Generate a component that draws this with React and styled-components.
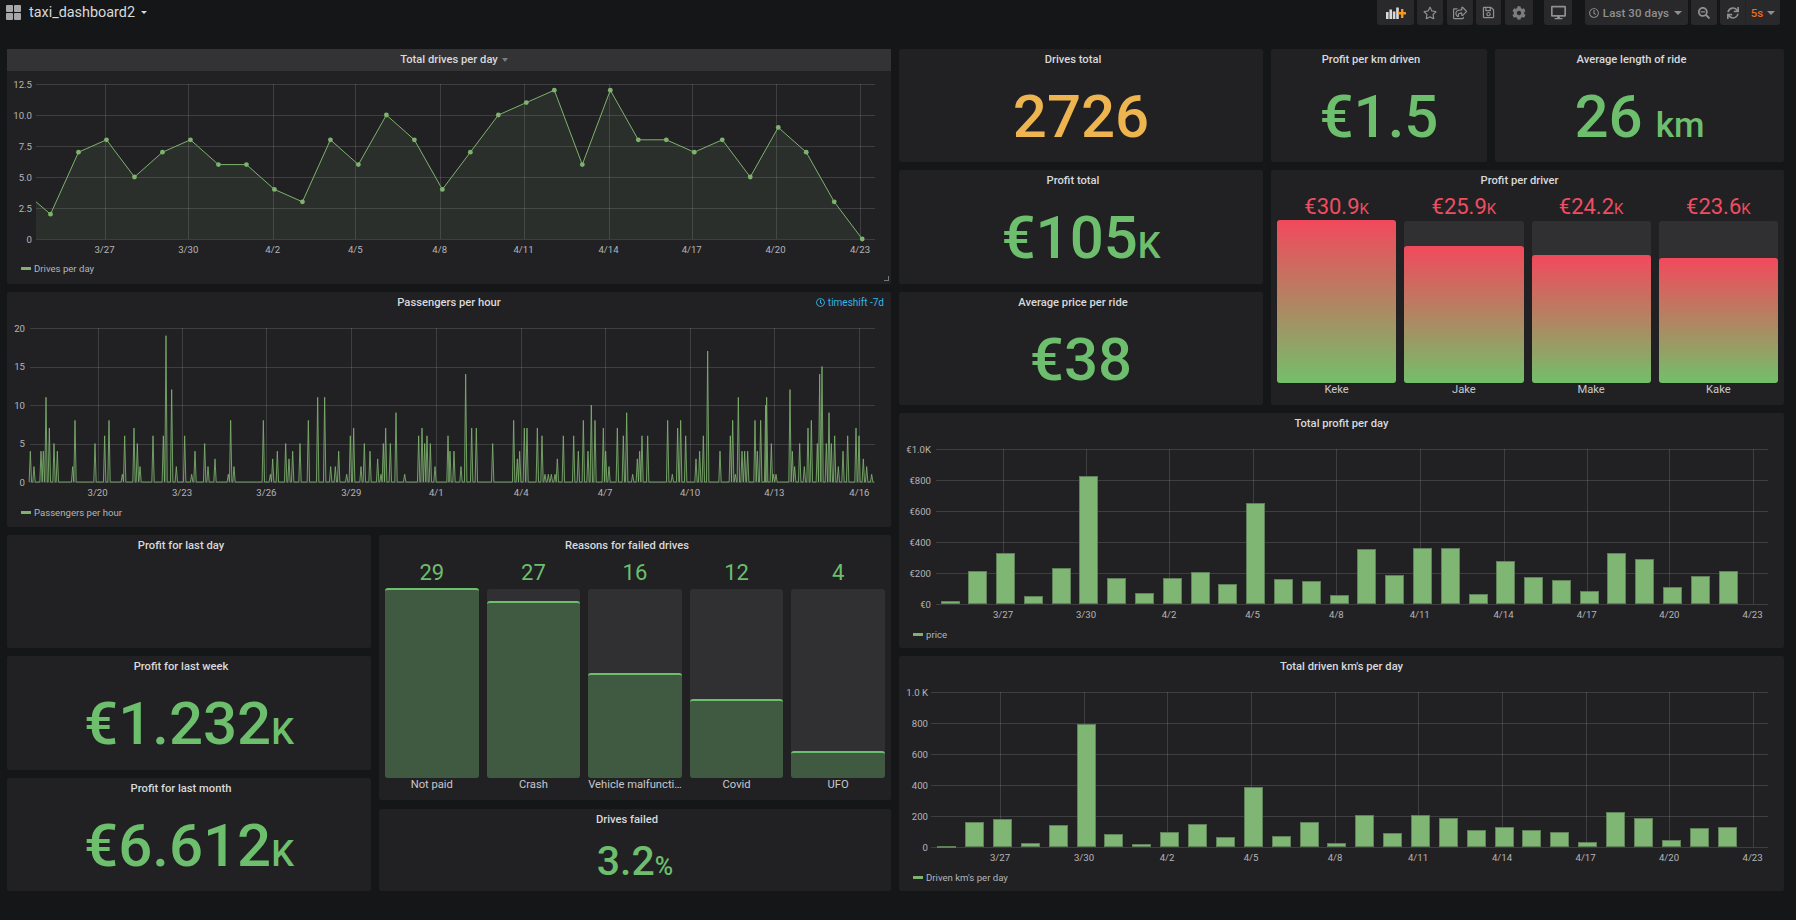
import React from 'react';
import styled, { createGlobalStyle } from 'styled-components';
import {
  FaRegStar,
  FaRegShareSquare,
  FaRegSave,
  FaCog,
  FaDesktop,
  FaRegClock,
  FaSearchMinus,
  FaSync,
} from 'react-icons/fa';

const GREEN = '#6dbf6d';
const LINE = '#7eb26d';

const drivesPerDay = [
  2, 7, 8, 5, 7, 8, 6, 6, 4, 3, 8, 6, 10, 8, 4, 7, 10, 11, 12, 6, 12, 8, 8, 7, 8, 5, 9, 7, 3, 0,
];

// [x in the 450px crop * 3, passengers]
const passengersLeft = [
  [91, 4], [102, 2], [123, 4], [130, 4], [138, 11], [148, 7], [162, 5], [172, 4], [218, 2], [225, 8],
  [285, 5], [314, 6], [327, 8], [367, 1], [374, 6], [402, 7], [412, 5], [420, 2], [459, 6], [490, 6],
  [498, 19], [515, 12], [529, 2], [554, 6], [575, 1], [585, 4], [614, 5], [624, 2], [645, 3], [685, 1],
  [692, 8], [702, 2], [790, 8], [811, 1], [818, 3], [832, 4], [857, 5], [867, 3], [878, 4], [900, 5],
  [925, 8], [953, 11], [974, 11], [992, 2], [1006, 2], [1016, 4], [1040, 1], [1051, 6], [1061, 7],
  [1083, 2], [1093, 5], [1110, 4], [1133, 3], [1143, 1], [1150, 5], [1157, 7], [1171, 5], [1188, 9],
  [1214, 1], [1256, 6], [1266, 7], [1274, 5], [1281, 6], [1291, 5], [1305, 2], [1344, 6],
];
const passengersRight = [
  [0, 4], [12, 4], [33, 2], [47, 14], [65, 7], [79, 7], [128, 5], [191, 8], [202, 3], [209, 4],
  [223, 7], [231, 7], [262, 7], [276, 6], [285, 1], [295, 1], [304, 1], [315, 1], [322, 3], [340, 6],
  [371, 6], [385, 4], [400, 8], [414, 4], [424, 10], [435, 8], [460, 7], [467, 4], [477, 2], [502, 7],
  [520, 6], [530, 9], [548, 1], [562, 3], [569, 4], [576, 6], [593, 6], [653, 8], [667, 1], [683, 7],
  [692, 8], [707, 6], [738, 3], [749, 4], [760, 6], [773, 17], [810, 4], [841, 6], [848, 8], [856, 1],
  [865, 11], [876, 4], [884, 4], [893, 4], [915, 8], [922, 4], [932, 8], [947, 10], [950, 11], [964, 5],
  [970, 1], [978, 1], [1020, 12], [1027, 4], [1034, 2], [1049, 5], [1063, 2], [1074, 7], [1084, 8],
  [1102, 5], [1109, 14], [1116, 15], [1129, 5], [1137, 9], [1144, 5], [1154, 6], [1165, 2], [1179, 4],
  [1193, 6], [1218, 7], [1227, 6], [1240, 3], [1250, 2], [1265, 1],
];

const profitPerDay = [
  19, 213, 327, 54, 233, 825, 170, 69, 170, 205, 129, 649, 162, 147, 58, 356, 187, 364, 360, 65, 278,
  175, 155, 86, 330, 289, 108, 181, 213,
];
const kmPerDay = [
  5, 159, 179, 24, 142, 795, 82, 22, 95, 147, 65, 386, 69, 159, 24, 207, 90, 205, 190, 112, 131, 108,
  100, 35, 225, 187, 48, 125, 130,
];

const spikePoints = () => {
  const all = [
    ...passengersLeft.map(([x, v]) => [x / 3, v]),
    ...passengersRight.map(([x, v]) => [450 + x / 3, v]),
  ];
  const pts = [[29.5, 0]];
  all.forEach(([x, v]) => {
    pts.push([x - 1.2, 0], [x, v], [x + 1.2, 0]);
  });
  pts.push([874, 0]);
  return pts;
};

const lineGraph = {
  title: 'Total drives per day',
  legend: 'Drives per day',
  x0: 7,
  y0: 71,
  width: 884,
  height: 186,
  left: 36,
  right: 875,
  top: 84,
  bottom: 239,
  max: 12.5,
  labelX: 32,
  yTicks: [['12.5', 12.5], ['10.0', 10], ['7.5', 7.5], ['5.0', 5], ['2.5', 2.5], ['0', 0]],
  xTicks: [
    ['3/27', 104.5], ['3/30', 188.3], ['4/2', 272.7], ['4/5', 355.3], ['4/8', 439.7],
    ['4/11', 523.5], ['4/14', 608.5], ['4/17', 691.7], ['4/20', 775.5], ['4/23', 860],
  ],
  points: [[36, 3], ...drivesPerDay.map((v, i) => [50.5 + i * 27.99, v])],
  dots: true,
};

const hourGraph = {
  title: 'Passengers per hour',
  legend: 'Passengers per hour',
  x0: 7,
  y0: 314,
  width: 884,
  height: 187,
  left: 30,
  right: 875,
  top: 328,
  bottom: 482,
  max: 20,
  labelX: 25,
  yTicks: [['20', 20], ['15', 15], ['10', 10], ['5', 5], ['0', 0]],
  xTicks: [
    ['3/20', 97.6], ['3/23', 182], ['3/26', 266.4], ['3/29', 351.3], ['4/1', 436.3],
    ['4/4', 521.2], ['4/7', 605], ['4/10', 690], ['4/13', 774.4], ['4/16', 859.4],
  ],
  points: spikePoints(),
  lineOpacity: 0.85,
};

const profitGraph = {
  title: 'Total profit per day',
  legend: 'price',
  x0: 899,
  y0: 435,
  width: 885,
  height: 188,
  left: 936,
  right: 1768,
  top: 449,
  bottom: 604,
  max: 1000,
  labelX: 931,
  yTicks: [['€1.0K', 1000], ['€800', 800], ['€600', 600], ['€400', 400], ['€200', 200], ['€0', 0]],
  xTicks: [
    ['3/27', 1003], ['3/30', 1086], ['4/2', 1169], ['4/5', 1252.6], ['4/8', 1336.4],
    ['4/11', 1419.7], ['4/14', 1503.5], ['4/17', 1586.7], ['4/20', 1669.4], ['4/23', 1752.6],
  ],
  bars: profitPerDay,
  barStart: 950,
  barStep: 27.79,
};

const kmGraph = {
  title: "Total driven km's per day",
  legend: "Driven km's per day",
  x0: 899,
  y0: 678,
  width: 885,
  height: 188,
  left: 931,
  right: 1768,
  top: 692,
  bottom: 847,
  max: 1000,
  labelX: 928,
  yTicks: [['1.0 K', 1000], ['800', 800], ['600', 600], ['400', 400], ['200', 200], ['0', 0]],
  xTicks: [
    ['3/27', 1000], ['3/30', 1084], ['4/2', 1167], ['4/5', 1251], ['4/8', 1335],
    ['4/11', 1418], ['4/14', 1502], ['4/17', 1585.6], ['4/20', 1669], ['4/23', 1752.6],
  ],
  bars: kmPerDay,
  barStart: 946.7,
  barStep: 27.87,
};

const failedReasons = [
  { label: 'Not paid', value: 29, text: '29' },
  { label: 'Crash', value: 27, text: '27' },
  { label: 'Vehicle malfuncti…', value: 16, text: '16' },
  { label: 'Covid', value: 12, text: '12' },
  { label: 'UFO', value: 4, text: '4' },
];

const driverProfit = [
  { label: 'Keke', value: 30.9, text: '€30.9', unit: 'K' },
  { label: 'Jake', value: 25.9, text: '€25.9', unit: 'K' },
  { label: 'Make', value: 24.2, text: '€24.2', unit: 'K' },
  { label: 'Kake', value: 23.6, text: '€23.6', unit: 'K' },
];

const Graph = ({ config }) => {
  const { x0, y0, width, height, left, right, top, bottom, max, labelX } = config;
  const toY = (v) => bottom - (v / max) * (bottom - top);
  const line = config.points && config.points.map(([x, v]) => `${x},${toY(v)}`).join(' ');
  const area = config.points && `${left},${bottom} ${line} ${config.points.at(-1)[0]},${bottom}`;
  return (
    <PlotSvg width={width} height={height} viewBox={`${x0} ${y0} ${width} ${height}`}>
      {config.yTicks.map(([label, v]) => (
        <g key={label}>
          <GridLine x1={left} x2={right} y1={Math.round(toY(v)) + 0.5} y2={Math.round(toY(v)) + 0.5} />
          <TickText x={labelX} y={toY(v)} textAnchor="end" dominantBaseline="central">
            {label}
          </TickText>
        </g>
      ))}
      {config.xTicks.map(([label, x]) => (
        <g key={label}>
          <GridLine x1={Math.round(x) + 0.5} x2={Math.round(x) + 0.5} y1={top} y2={bottom} />
          <TickText x={x} y={bottom + 10} textAnchor="middle" dominantBaseline="central">
            {label}
          </TickText>
        </g>
      ))}
      {config.points && (
        <>
          <polygon points={area} fill={LINE} fillOpacity="0.1" />
          <polyline
            points={line}
            fill="none"
            stroke={LINE}
            strokeOpacity={config.lineOpacity || 1}
            strokeWidth="1"
            strokeLinejoin="round"
          />
        </>
      )}
      {config.dots &&
        config.points.slice(1).map(([x, v]) => <circle key={x} cx={x} cy={toY(v)} r="2.4" fill={LINE} />)}
      {config.bars &&
        config.bars.map((v, i) => (
          <DayBar
            key={i}
            x={Math.round(config.barStart + i * config.barStep - 9.5) + 0.5}
            y={Math.round(toY(v)) + 0.5}
            width="18"
            height={Math.max(bottom - Math.round(toY(v)) - 1, 1)}
          />
        ))}
    </PlotSvg>
  );
};

const GraphPanel = ({ area, config, active, shift }) => (
  <Panel $area={area}>
    <PanelHeader $active={active}>
      <TitleText>
        {config.title}
        {active && <TitleCaret />}
      </TitleText>
      {shift && (
        <TimeShift>
          <FaRegClock size={9} /> {shift}
        </TimeShift>
      )}
    </PanelHeader>
    <Graph config={config} />
    <Legend>
      <LegendSwatch />
      {config.legend}
    </Legend>
    {active && <ResizeHandle />}
  </Panel>
);

const Stat = ({ area, title, value, unit, unitGap, color = GREEN, size = 60, unitSize = 36, grow }) => (
  <Panel $area={area} $grow={grow}>
    <PanelHeader $inset>
      <TitleText>{title}</TitleText>
    </PanelHeader>
    <StatBody>
      {value && (
        <StatValue $color={color} $size={size}>
          {value}
          {unit && (
            <StatUnit $size={unitSize} $gap={unitGap}>
              {unit}
            </StatUnit>
          )}
        </StatValue>
      )}
    </StatBody>
  </Panel>
);

const BarGauge = ({ items, valueHeight, gradient, color }) => {
  const max = Math.max(...items.map((d) => d.value));
  return (
    <GaugeRow>
      {items.map((d) => (
        <GaugeCol key={d.label}>
          <GaugeValue $height={valueHeight} $color={color}>
            {d.text}
            {d.unit && <GaugeUnit>{d.unit}</GaugeUnit>}
          </GaugeValue>
          <GaugeTrack>
            <GaugeFill $gradient={gradient} style={{ height: `calc(${(d.value / max) * 100}% + 1px)` }} />
          </GaugeTrack>
          <GaugeLabel>{d.label}</GaugeLabel>
        </GaugeCol>
      ))}
    </GaugeRow>
  );
};

const AddPanelIcon = () => (
  <svg width="20" height="12" viewBox="0 0 20 12">
    <g fill="#d8d9da">
      <rect x="0" y="5" width="2.6" height="7" />
      <rect x="3.4" y="2.5" width="2.6" height="9.5" />
      <rect x="6.8" y="4.5" width="2.6" height="7.5" />
      <rect x="10.2" y="0.5" width="2.6" height="11.5" />
    </g>
    <path d="M12 5h3V2h2.4v3H20v2.4h-2.6V11H15V7.4h-3z" fill="#f79520" />
  </svg>
);

const App = () => (
  <>
    <GlobalStyle />
    <TopBar>
      <TitleBlock>
        <DashIcon>
          <i />
          <i />
          <i />
          <i />
        </DashIcon>
        <DashTitle>taxi_dashboard2</DashTitle>
        <SmallCaret $color="#d8d9da" />
      </TitleBlock>
      <Tools>
        <ToolButton $width={37}>
          <AddPanelIcon />
        </ToolButton>
        <ToolButton $width={26} $gap={3}>
          <FaRegStar size={14} />
        </ToolButton>
        <ToolButton $width={26} $gap={4}>
          <FaRegShareSquare size={14} />
        </ToolButton>
        <ToolButton $width={25} $gap={3}>
          <FaRegSave size={13} />
        </ToolButton>
        <ToolButton $width={28} $gap={4}>
          <FaCog size={14} color="#7b7c7d" />
        </ToolButton>
        <ToolButton $width={28} $gap={11}>
          <FaDesktop size={15} />
        </ToolButton>
        <ToolButton $width={103} $gap={13}>
          <FaRegClock size={10} />
          <RangeText>Last 30 days</RangeText>
          <SmallCaret $color="#8f9092" $left={5} $wide />
          <CaretSpacer />
        </ToolButton>
        <ToolButton $width={26} $gap={3}>
          <FaSearchMinus size={12} />
        </ToolButton>
        <RefreshGroup>
          <RefreshPart>
            <FaSync size={12} />
          </RefreshPart>
          <IntervalPart>
            5s
            <SmallCaret $color="#8f9092" $left={4} $wide />
          </IntervalPart>
        </RefreshGroup>
      </Tools>
    </TopBar>
    <Board>
      <GraphPanel area="drives" config={lineGraph} active />
      <GraphPanel area="hours" config={hourGraph} shift="timeshift -7d" />
      <Stat area="day" title="Profit for last day" />
      <Stat area="week" title="Profit for last week" value="€1.232" unit="K" />
      <Stat area="month" title="Profit for last month" value="€6.612" unit="K" />
      <MiddleColumn>
        <Panel $height={265}>
          <PanelHeader $inset>
            <TitleText>Reasons for failed drives</TitleText>
          </PanelHeader>
          <BarGauge items={failedReasons} valueHeight={32} color={GREEN} />
        </Panel>
        <Stat title="Drives failed" value="3.2" unit="%" size={41} unitSize={25} grow />
      </MiddleColumn>
      <Stat area="total" title="Drives total" value="2726" color="#eeb44f" />
      <Stat area="perkm" title="Profit per km driven" value="€1.5" />
      <Stat area="length" title="Average length of ride" value="26" unit="km" unitGap={13} unitSize={35} />
      <Stat area="profit" title="Profit total" value="€105" unit="K" />
      <Stat area="price" title="Average price per ride" value="€38" />
      <Panel $area="driver">
        <PanelHeader $inset>
          <TitleText>Profit per driver</TitleText>
        </PanelHeader>
        <BarGauge items={driverProfit} valueHeight={29} gradient color="#ef4d60" />
      </Panel>
      <GraphPanel area="daily" config={profitGraph} />
      <GraphPanel area="km" config={kmGraph} />
    </Board>
  </>
);

const GlobalStyle = createGlobalStyle`
  html, body {
    margin: 0;
    padding: 0;
    background: #151618;
    min-height: 100vh;
    overflow: hidden;
    font-family: Roboto, "Liberation Sans", sans-serif;
    color: #d8d9da;
  }
`;

const TopBar = styled.header`
  display: flex;
  justify-content: space-between;
  height: 25px;
  padding: 0 16px 0 6px;
`;

const TitleBlock = styled.div`
  display: flex;
  align-items: center;
`;

const DashIcon = styled.span`
  display: grid;
  grid-template-columns: 7px 7px;
  grid-auto-rows: 7px;
  gap: 1px;
  i {
    background: #a6a7a8;
    border-radius: 1px;
  }
`;

const DashTitle = styled.span`
  margin-left: 8px;
  font-size: 14.4px;
  color: #d8d9da;
`;

const SmallCaret = styled.span`
  display: inline-block;
  margin-left: ${(p) => p.$left ?? 6}px;
  width: 0;
  height: 0;
  border-left: ${(p) => (p.$wide ? 4 : 3)}px solid transparent;
  border-right: ${(p) => (p.$wide ? 4 : 3)}px solid transparent;
  border-top: ${(p) => (p.$wide ? 4 : 3)}px solid ${(p) => p.$color};
`;

const CaretSpacer = styled.span`
  width: 2px;
`;

const Tools = styled.nav`
  display: flex;
`;

const ToolButton = styled.button`
  display: flex;
  align-items: center;
  justify-content: center;
  width: ${(p) => p.$width}px;
  height: 25px;
  margin-left: ${(p) => p.$gap || 0}px;
  padding: 0;
  border: none;
  border-radius: 0 0 3px 3px;
  background: #29292b;
  color: #8f9092;
  font-family: inherit;
`;

const RangeText = styled.span`
  margin-left: 4px;
  font-size: 11.5px;
  font-weight: 500;
  letter-spacing: 0.1px;
  color: #8f9092;
`;

const RefreshGroup = styled.div`
  display: flex;
  margin-left: 3px;
  height: 25px;
  border-radius: 0 0 3px 3px;
  background: #29292b;
  color: #8f9092;
`;

const RefreshPart = styled.span`
  display: flex;
  align-items: center;
  justify-content: center;
  width: 25px;
`;

const IntervalPart = styled.span`
  display: flex;
  align-items: center;
  justify-content: center;
  width: 34px;
  border-left: 1px solid #242426;
  font-size: 11.5px;
  font-weight: 500;
  color: #eb6a1f;
`;

const Board = styled.main`
  display: grid;
  margin: 24px 0 0 7px;
  width: 1777px;
  gap: 8px;
  grid-template-columns: 364px 512px 364px 216px 289px;
  grid-template-rows: 113px 114px 113px 114px 113px 114px 113px;
  grid-template-areas:
    'drives drives total perkm length'
    'drives drives profit driver driver'
    'hours hours price driver driver'
    'hours hours daily daily daily'
    'day middle daily daily daily'
    'week middle km km km'
    'month middle km km km';
`;

const MiddleColumn = styled.div`
  grid-area: middle;
  display: flex;
  flex-direction: column;
  gap: 9px;
  min-height: 0;
`;

const Panel = styled.section`
  position: relative;
  display: flex;
  flex-direction: column;
  min-width: 0;
  min-height: 0;
  background: #212124;
  border-radius: 2px;
  ${(p) => p.$area && `grid-area: ${p.$area};`}
  ${(p) => p.$height && `height: ${p.$height}px; flex: none;`}
  ${(p) => p.$grow && 'flex: 1;'}
`;

const PanelHeader = styled.div`
  position: relative;
  flex: none;
  height: 22px;
  line-height: 21px;
  padding-right: ${(p) => (p.$inset ? 16 : 0)}px;
  text-align: center;
  font-size: 11.2px;
  font-weight: 500;
  color: #d8d9da;
  background: ${(p) => (p.$active ? '#333335' : 'transparent')};
`;

const TitleText = styled.span`
  position: relative;
`;

const TitleCaret = styled.span`
  position: absolute;
  left: 100%;
  top: 5px;
  margin-left: 4px;
  border-left: 3.5px solid transparent;
  border-right: 3.5px solid transparent;
  border-top: 4px solid #7b7c7d;
`;

const TimeShift = styled.span`
  position: absolute;
  right: 7px;
  top: 0;
  font-size: 10px;
  font-weight: 400;
  color: #33b5e5;
  svg {
    vertical-align: -1px;
  }
`;

const ResizeHandle = styled.span`
  position: absolute;
  right: 2px;
  bottom: 3px;
  width: 4px;
  height: 4px;
  border-right: 1px solid #77787a;
  border-bottom: 1px solid #77787a;
`;

const PlotSvg = styled.svg`
  display: block;
  flex: none;
`;

const GridLine = styled.line`
  stroke: rgba(216, 217, 218, 0.16);
  stroke-width: 1;
`;

const TickText = styled.text`
  font-family: Roboto, "Liberation Sans", sans-serif;
  font-size: 9.6px;
  fill: #b4b5b7;
`;

const DayBar = styled.rect`
  fill: #7fb674;
  stroke: #5f8058;
  stroke-width: 1;
`;

const Legend = styled.div`
  display: flex;
  align-items: center;
  height: 22px;
  padding-left: 14px;
  font-size: 9.6px;
  color: #b4b5b7;
`;

const LegendSwatch = styled.span`
  width: 10px;
  height: 3px;
  margin-right: 3px;
  background: ${LINE};
`;

const StatBody = styled.div`
  flex: 1;
  display: flex;
  align-items: center;
  justify-content: center;
  min-height: 0;
`;

const StatValue = styled.div`
  font-size: ${(p) => p.$size}px;
  font-weight: 500;
  line-height: 1;
  color: ${(p) => p.$color};
  white-space: nowrap;
`;

const StatUnit = styled.span`
  margin-left: ${(p) => p.$gap || 0}px;
  font-size: ${(p) => p.$size}px;
`;

const GaugeRow = styled.div`
  flex: 1;
  display: flex;
  gap: 8px;
  min-height: 0;
  padding: 0 6px 8px;
`;

const GaugeCol = styled.div`
  flex: 1 1 0;
  min-width: 0;
  display: flex;
  flex-direction: column;
`;

const GaugeValue = styled.div`
  flex: none;
  height: ${(p) => p.$height}px;
  line-height: ${(p) => p.$height}px;
  text-align: center;
  font-size: 22px;
  color: ${(p) => p.$color};
`;

const GaugeUnit = styled.span`
  font-size: 15px;
`;

const GaugeTrack = styled.div`
  position: relative;
  flex: 1;
  border-radius: 3px;
  background: #303033;
`;

const GaugeFill = styled.div`
  position: absolute;
  left: 0;
  right: 0;
  bottom: 0;
  border-radius: 3px;
  ${(p) =>
    p.$gradient
      ? 'background: linear-gradient(180deg, #f2495c, #73bf69);'
      : `background: #3f5a40; border-top: 2px solid ${GREEN}; box-sizing: border-box;`}
`;

const GaugeLabel = styled.div`
  flex: none;
  height: 14px;
  line-height: 14px;
  text-align: center;
  font-size: 11.2px;
  color: #c7c8ca;
  white-space: nowrap;
`;

export default App;
